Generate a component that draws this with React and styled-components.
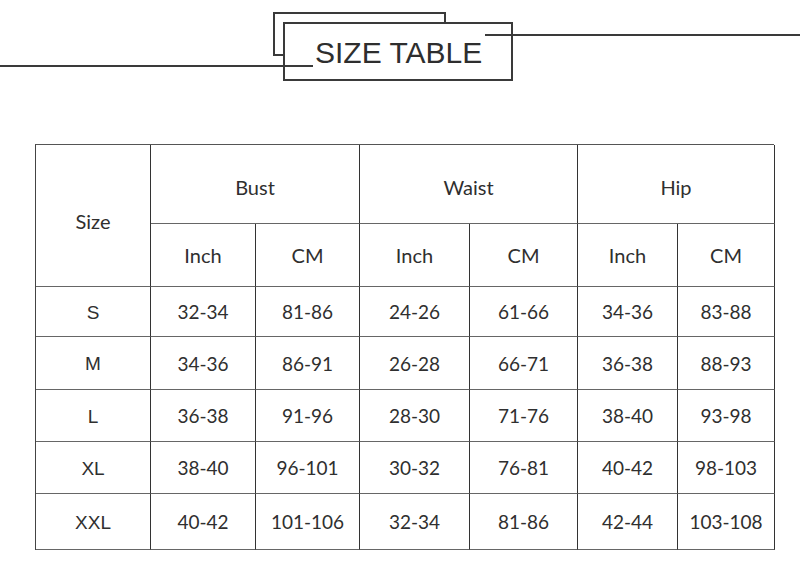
import React from "react";
import styled, { createGlobalStyle } from "styled-components";

const Global = createGlobalStyle`
  html, body { margin: 0; padding: 0; background: #fff; }
  body { width: 800px; height: 562px; overflow: hidden; }
`;

const Page = styled.div`
  width: 800px;
  height: 562px;
  background: #fff;
  display: flex;
  flex-direction: column;
`;

const HeaderBand = styled.div`
  position: relative;
  height: 144px;
  flex: none;
`;

const Rule = styled.div`
  position: absolute;
  height: 2px;
  background: #3a3a3a;
  z-index: 3;
  top: ${(p) => p.$top}px;
  left: ${(p) => p.$left}px;
  width: ${(p) => p.$width}px;
`;

const BackFrame = styled.div`
  position: absolute;
  left: 273px;
  top: 12px;
  width: 173px;
  height: 44px;
  box-sizing: border-box;
  border: 2px solid #3a3a3a;
  z-index: 1;
`;

const FrontFrame = styled.div`
  position: absolute;
  left: 283px;
  top: 22px;
  width: 230px;
  height: 59px;
  box-sizing: border-box;
  border: 2px solid #3a3a3a;
  background: #fff;
  z-index: 2;
  padding: 14px 0 0 30px;
`;

const Title = styled.h1`
  margin: 0;
  font-family: "Liberation Sans", Arial, sans-serif;
  font-weight: 400;
  font-size: 30px;
  line-height: 30px;
  color: #2e2e2e;
  white-space: nowrap;
`;

const Table = styled.div`
  margin-left: 35px;
  width: 739px;
  box-sizing: border-box;
  display: grid;
  grid-template-columns: 115px 105px 104px 110px 108px 100px 97px;
  grid-template-rows: 79px 63px 50px 53px 52px 52px 56px;
  border-top: 1px solid #555;
  border-left: 1px solid #444;
`;

const Cell = styled.div`
  box-sizing: border-box;
  border-right: 1px solid #333;
  border-bottom: 1px solid #666;
  display: flex;
  align-items: center;
  justify-content: center;
  font-family: Lato, "Noto Sans", sans-serif;
  font-size: ${(p) => p.$fs || 19}px;
  color: #2f2f2f;
  grid-column: ${(p) => p.$col || "auto"};
  grid-row: ${(p) => p.$row || "auto"};
  padding-top: ${(p) => p.$pt || 0}px;
`;

const SizeLabel = styled(Cell)`
  font-family: "Liberation Sans", Arial, sans-serif;
  font-size: 19px;
  padding-top: 2px;
`;

const groups = ["Bust", "Waist", "Hip"];
const rows = [
  ["S", "32-34", "81-86", "24-26", "61-66", "34-36", "83-88"],
  ["M", "34-36", "86-91", "26-28", "66-71", "36-38", "88-93"],
  ["L", "36-38", "91-96", "28-30", "71-76", "38-40", "93-98"],
  ["XL", "38-40", "96-101", "30-32", "76-81", "40-42", "98-103"],
  ["XXL", "40-42", "101-106", "32-34", "81-86", "42-44", "103-108"],
];

export default function App() {
  return (
    <Page>
      <Global />
      <HeaderBand>
        <BackFrame />
        <FrontFrame>
          <Title>SIZE TABLE</Title>
        </FrontFrame>
        <Rule $top={65} $left={0} $width={313} />
        <Rule $top={34} $left={485} $width={315} />
      </HeaderBand>
      <Table>
        <Cell $col="1" $row="1 / span 2" $pt={10} $fs={20}>Size</Cell>
        {groups.map((g, i) => (
          <Cell key={g} $col={`${2 + i * 2} / span 2`} $row="1" $pt={6} $fs={20}>
            {g}
          </Cell>
        ))}
        {groups.map((g) => (
          <React.Fragment key={g + "u"}>
            <Cell $row="2" $fs={20}>Inch</Cell>
            <Cell $row="2" $fs={20}>CM</Cell>
          </React.Fragment>
        ))}
        {rows.map((r) =>
          r.map((v, j) =>
            j === 0 ? (
              <SizeLabel key={r[0] + j}>{v}</SizeLabel>
            ) : (
              <Cell key={r[0] + j}>{v}</Cell>
            )
          )
        )}
      </Table>
    </Page>
  );
}
